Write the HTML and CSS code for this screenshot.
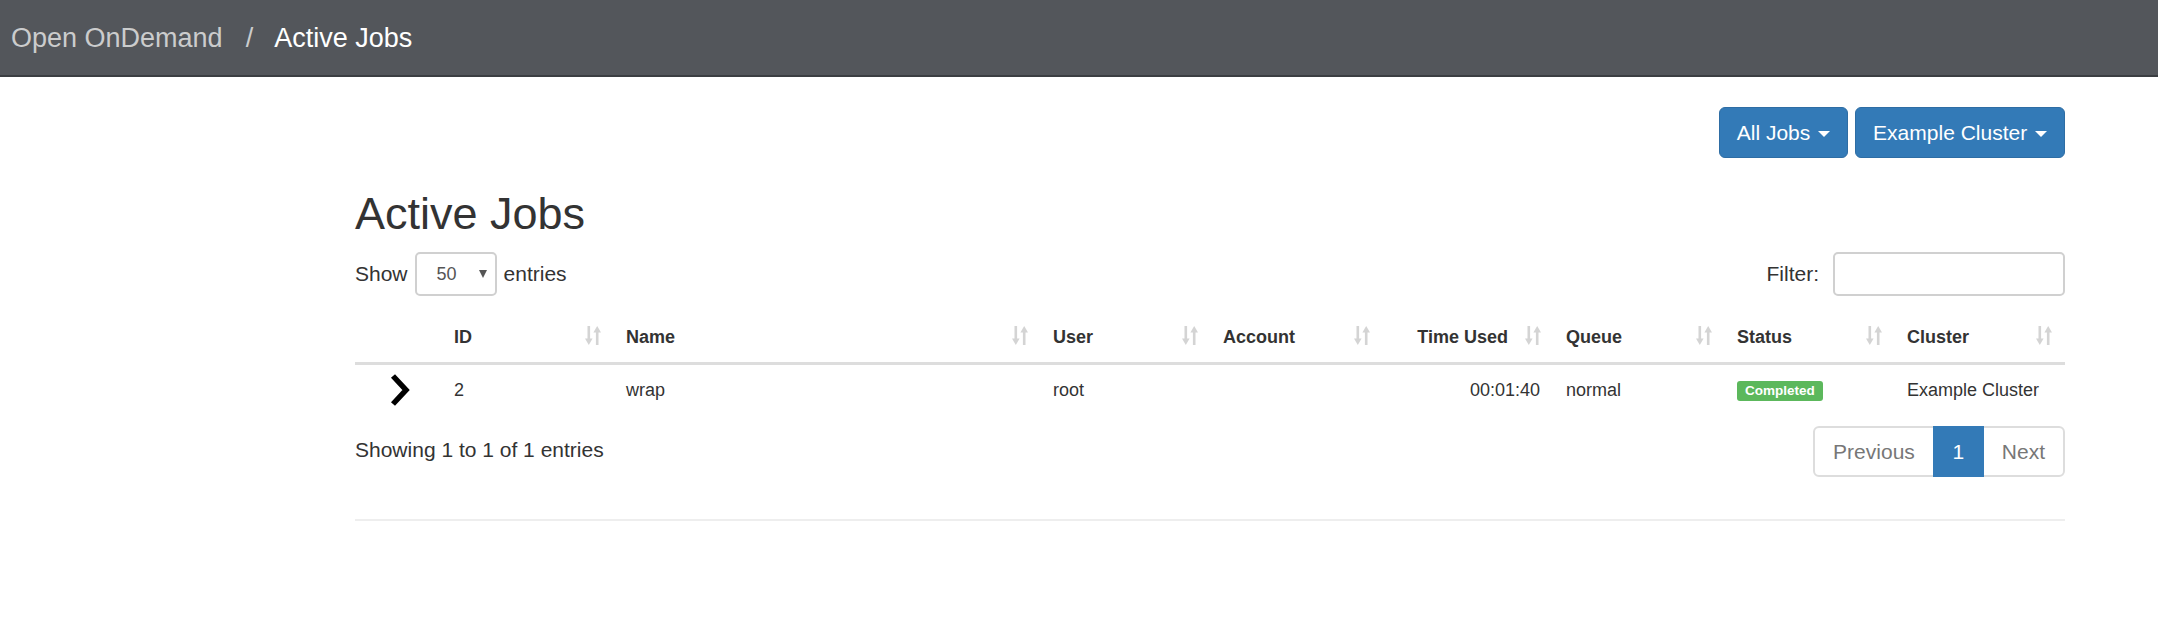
FILE: index.html
```html
<!DOCTYPE html>
<html lang="en">
<head>
<meta charset="utf-8">
<title>Active Jobs</title>
<link rel="stylesheet" href="styles.css">
</head>
<body>
<nav class="navbar">
  <span class="crumb-root">Open OnDemand</span>
  <span class="crumb-sep">/</span>
  <span class="crumb-current">Active Jobs</span>
</nav>

<main class="container">
  <div class="toolbar">
    <button class="btn">All Jobs <span class="caret"></span></button>
    <button class="btn">Example Cluster <span class="caret"></span></button>
  </div>

  <h1 class="page-title">Active Jobs</h1>

  <div class="controls">
    <label class="length">Show
      <span class="select"><span class="select-value">50</span><span class="select-arrow"></span></span>
      entries</label>
    <label class="filter">Filter: <span class="filter-input"></span></label>
  </div>

  <table class="jobs">
    <colgroup>
      <col class="w-exp"><col class="w-id"><col class="w-name"><col class="w-user"><col class="w-account"><col class="w-time"><col class="w-queue"><col class="w-status"><col class="w-cluster">
    </colgroup>
    <thead>
      <tr>
        <th></th>
        <th><div class="th-in"><span>ID</span><svg class="sort" viewBox="0 0 16 19" width="16" height="19"><rect x="2.5" y="0" width="2.6" height="14"/><polygon points="0,12.5 7.6,12.5 3.8,19"/><polygon points="8.4,6.5 16,6.5 12.2,0"/><rect x="10.9" y="5" width="2.6" height="14"/></svg></div></th>
        <th><div class="th-in"><span>Name</span><svg class="sort" viewBox="0 0 16 19" width="16" height="19"><rect x="2.5" y="0" width="2.6" height="14"/><polygon points="0,12.5 7.6,12.5 3.8,19"/><polygon points="8.4,6.5 16,6.5 12.2,0"/><rect x="10.9" y="5" width="2.6" height="14"/></svg></div></th>
        <th><div class="th-in"><span>User</span><svg class="sort" viewBox="0 0 16 19" width="16" height="19"><rect x="2.5" y="0" width="2.6" height="14"/><polygon points="0,12.5 7.6,12.5 3.8,19"/><polygon points="8.4,6.5 16,6.5 12.2,0"/><rect x="10.9" y="5" width="2.6" height="14"/></svg></div></th>
        <th><div class="th-in"><span>Account</span><svg class="sort" viewBox="0 0 16 19" width="16" height="19"><rect x="2.5" y="0" width="2.6" height="14"/><polygon points="0,12.5 7.6,12.5 3.8,19"/><polygon points="8.4,6.5 16,6.5 12.2,0"/><rect x="10.9" y="5" width="2.6" height="14"/></svg></div></th>
        <th><div class="th-in th-right"><span>Time Used</span><svg class="sort" viewBox="0 0 16 19" width="16" height="19"><rect x="2.5" y="0" width="2.6" height="14"/><polygon points="0,12.5 7.6,12.5 3.8,19"/><polygon points="8.4,6.5 16,6.5 12.2,0"/><rect x="10.9" y="5" width="2.6" height="14"/></svg></div></th>
        <th><div class="th-in"><span>Queue</span><svg class="sort" viewBox="0 0 16 19" width="16" height="19"><rect x="2.5" y="0" width="2.6" height="14"/><polygon points="0,12.5 7.6,12.5 3.8,19"/><polygon points="8.4,6.5 16,6.5 12.2,0"/><rect x="10.9" y="5" width="2.6" height="14"/></svg></div></th>
        <th><div class="th-in"><span>Status</span><svg class="sort" viewBox="0 0 16 19" width="16" height="19"><rect x="2.5" y="0" width="2.6" height="14"/><polygon points="0,12.5 7.6,12.5 3.8,19"/><polygon points="8.4,6.5 16,6.5 12.2,0"/><rect x="10.9" y="5" width="2.6" height="14"/></svg></div></th>
        <th><div class="th-in"><span>Cluster</span><svg class="sort" viewBox="0 0 16 19" width="16" height="19"><rect x="2.5" y="0" width="2.6" height="14"/><polygon points="0,12.5 7.6,12.5 3.8,19"/><polygon points="8.4,6.5 16,6.5 12.2,0"/><rect x="10.9" y="5" width="2.6" height="14"/></svg></div></th>
      </tr>
    </thead>
    <tbody>
      <tr>
        <td class="td-exp"><svg class="chevron" viewBox="0 0 22 32" width="22" height="32"><polyline points="3,2 16,16 3,30"/></svg></td>
        <td>2</td>
        <td>wrap</td>
        <td>root</td>
        <td></td>
        <td class="td-right">00:01:40</td>
        <td>normal</td>
        <td><span class="badge">Completed</span></td>
        <td>Example Cluster</td>
      </tr>
    </tbody>
  </table>

  <div class="table-footer">
    <div class="info">Showing 1 to 1 of 1 entries</div>
    <ul class="pagination">
      <li class="page page-first">Previous</li>
      <li class="page page-active">1</li>
      <li class="page page-last">Next</li>
    </ul>
  </div>

  <hr class="rule">
</main>
</body>
</html>
```

FILE: styles.css
```css
* { box-sizing: border-box; }

body {
  margin: 0;
  background: #fff;
  color: #333;
  font-family: "Liberation Sans", Arial, Helvetica, sans-serif;
  font-size: 21px;
  line-height: 30px;
}

/* Navbar */
.navbar {
  height: 77px;
  background: #53565b;
  border-bottom: 2px solid #3b3e42;
  display: flex;
  align-items: center;
  padding-left: 11px;
  font-size: 27px;
  line-height: 36px;
}
.crumb-root { color: #cbcccd; }
.crumb-sep { color: #cbcccd; padding: 0 21px 0 23px; }
.crumb-current { color: #fff; }

/* Content */
.container {
  width: 1710px;
  margin-left: 355px;
}

.toolbar {
  display: flex;
  justify-content: flex-end;
  gap: 7px;
  margin-top: 30px;
}
.btn {
  font-family: inherit;
  font-size: 21px;
  line-height: 31px;
  color: #fff;
  background: #337ab7;
  border: 1px solid #2e6da4;
  border-radius: 6px;
  padding: 9px 17px;
  margin: 0;
}
.caret {
  display: inline-block;
  width: 0;
  height: 0;
  margin-left: 2px;
  vertical-align: middle;
  border-top: 6px solid #fff;
  border-left: 6px solid transparent;
  border-right: 6px solid transparent;
}

.page-title {
  margin: 31px 0 0;
  font-size: 45px;
  line-height: 50px;
  font-weight: 500;
  color: #333;
}

.controls {
  margin-top: 13px;
  display: flex;
  justify-content: space-between;
  align-items: center;
}
.length {
  display: flex;
  align-items: center;
  gap: 7px;
}
.select {
  width: 82px;
  height: 44px;
  border: 2px solid #d0d0d0;
  border-radius: 5px;
  display: flex;
  align-items: center;
  padding-left: 20px;
  padding-right: 8px;
  font-size: 18px;
  color: #555;
}
.select-value { flex: 1; }
.select-arrow {
  width: 0;
  height: 0;
  border-top: 8px solid #555;
  border-left: 4px solid transparent;
  border-right: 4px solid transparent;
}
.filter {
  display: flex;
  align-items: center;
}
.filter-input {
  width: 232px;
  height: 44px;
  margin-left: 14px;
  border: 2px solid #d0d0d0;
  border-radius: 5px;
}

/* Table */
.jobs {
  margin-top: 16px;
  width: 1710px;
  table-layout: fixed;
  border-collapse: collapse;
  font-size: 18px;
  line-height: 26px;
}
.w-exp { width: 87px; }
.w-id { width: 172px; }
.w-name { width: 427px; }
.w-user { width: 170px; }
.w-account { width: 172px; }
.w-time { width: 171px; }
.w-queue { width: 171px; }
.w-status { width: 170px; }
.w-cluster { width: 170px; }

.jobs th {
  text-align: left;
  font-weight: bold;
  padding: 12px 13px 12px 12px;
  border-bottom: 3px solid #ddd;
}
.th-in {
  display: flex;
  align-items: center;
  justify-content: space-between;
}
.th-right { justify-content: flex-end; gap: 17px; }
.sort { fill: #d4d4d4; flex: none; margin-top: -3px; }

.jobs td {
  padding: 12px;
  vertical-align: middle;
}
.jobs .td-exp { text-align: center; padding: 0; }
.chevron {
  display: block;
  margin: 0 auto;
  position: relative;
  left: 2px;
  fill: none;
  stroke: #000;
  stroke-width: 5.5;
  stroke-linejoin: miter;
}
.jobs .td-right { text-align: right; padding-right: 14px; }

.badge {
  display: inline-block;
  background: #5cb85c;
  color: #fff;
  font-size: 13.5px;
  font-weight: bold;
  line-height: 13.5px;
  padding: 3px 8px 3px;
  border-radius: 3px;
  vertical-align: 1px;
}

/* Footer */
.table-footer {
  margin-top: 11px;
  display: flex;
  justify-content: space-between;
  align-items: flex-start;
}
.info { padding-top: 9px; }
.pagination {
  list-style: none;
  margin: 0;
  padding: 0;
  display: flex;
}
.page {
  height: 51px;
  padding: 0 18px;
  line-height: 47px;
  color: #777;
  border: 2px solid #ddd;
  margin-left: -2px;
}
.page-first { border-radius: 6px 0 0 6px; margin-left: 0; }
.page-last { border-radius: 0 6px 6px 0; }
.page-active {
  background: #337ab7;
  border-color: #337ab7;
  color: #fff;
  position: relative;
  width: 51px;
  text-align: center;
  padding: 0;
}

.rule {
  margin: 42px 0 0;
  border: 0;
  height: 2px;
  background: #eee;
}
```
